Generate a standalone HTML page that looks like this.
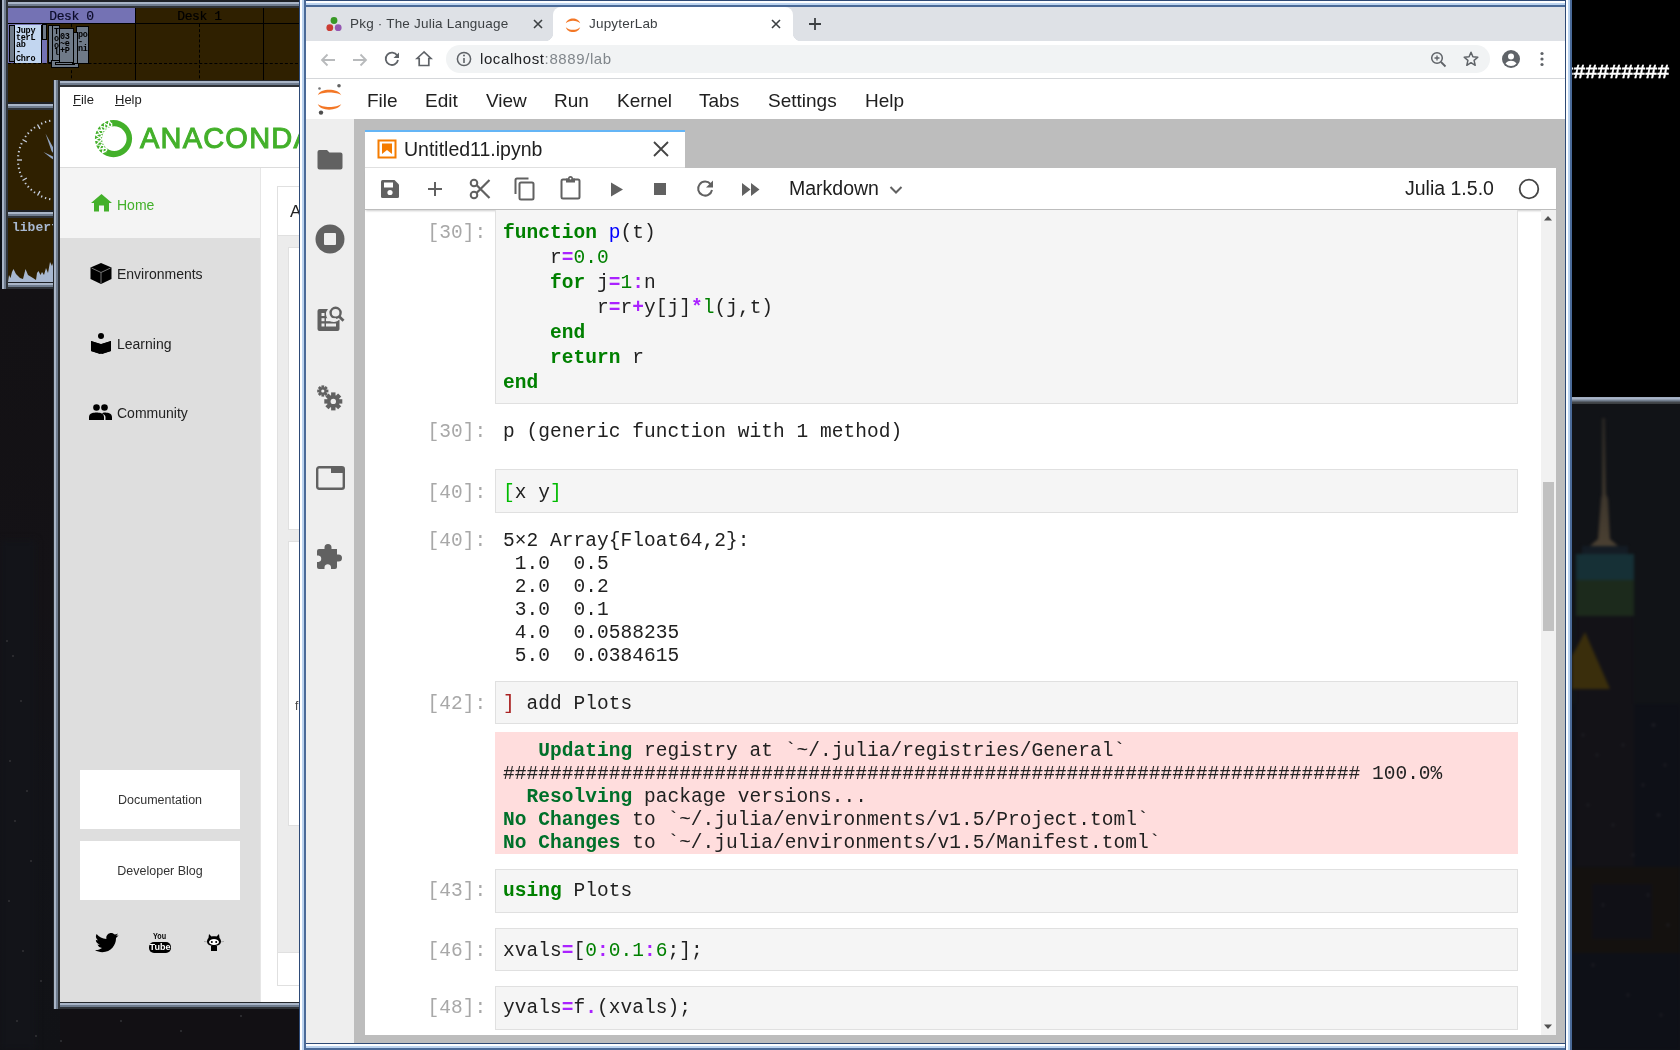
<!DOCTYPE html>
<html><head><meta charset="utf-8">
<style>
*{margin:0;padding:0;box-sizing:border-box}
html,body{width:1680px;height:1050px;overflow:hidden;background:#121014;font-family:"Liberation Sans",sans-serif;position:relative}
body>div{will-change:transform}
.a{position:absolute}
.mono{font-family:"Liberation Mono",monospace}
/* gray fvwm frame */
.gfr{background:#2f3338;box-shadow:inset 0 0 0 1px #25282c,inset 0 0 0 3px #a9b5c7,inset 0 0 0 5px #6f7c8e,inset 0 0 0 7px #2f3338}
.cl{position:absolute;font-family:"Liberation Mono",monospace;font-size:19.5px;white-space:pre;color:#212121;letter-spacing:0.04px}
.k{color:#008000;font-weight:bold}
.o{color:#aa22ff;font-weight:bold}
.n{color:#008000}
.g{color:#00702a;font-weight:bold}
.ib{background:#f5f5f5;border:1.5px solid #e0e0e0}
</style></head><body>

<!-- wallpaper bits -->
<div class="a" style="left:0;top:289px;width:60px;height:761px;background:linear-gradient(#131114,#141216 40%,#121318 70%,#111216)"></div>
<div class="a" style="left:0;top:540px;width:36px;height:510px;background:#131419;filter:blur(3px)"></div><div class="a" style="left:6px;top:640px;width:2px;height:2px;background:#2a2a2e"></div><div class="a" style="left:12px;top:655px;width:2px;height:2px;background:#2a2a2e"></div><div class="a" style="left:20px;top:700px;width:2px;height:2px;background:#2a2a2e"></div><div class="a" style="left:9px;top:760px;width:2px;height:2px;background:#2a2a2e"></div><div class="a" style="left:26px;top:790px;width:2px;height:2px;background:#2a2a2e"></div><div class="a" style="left:14px;top:820px;width:2px;height:2px;background:#2a2a2e"></div><div class="a" style="left:30px;top:860px;width:2px;height:2px;background:#2a2a2e"></div><div class="a" style="left:8px;top:900px;width:2px;height:2px;background:#2a2a2e"></div><div class="a" style="left:22px;top:950px;width:2px;height:2px;background:#2a2a2e"></div><div class="a" style="left:40px;top:980px;width:2px;height:2px;background:#2a2a2e"></div><div class="a" style="left:16px;top:1020px;width:2px;height:2px;background:#2a2a2e"></div><div class="a" style="left:35px;top:1035px;width:2px;height:2px;background:#2a2a2e"></div><div class="a" style="left:120px;top:1020px;width:2px;height:2px;background:#2a2a2e"></div><div class="a" style="left:180px;top:1030px;width:2px;height:2px;background:#2a2a2e"></div><div class="a" style="left:240px;top:1015px;width:2px;height:2px;background:#2a2a2e"></div><div class="a" style="left:60px;top:1040px;width:2px;height:2px;background:#2a2a2e"></div>
<div class="a" style="left:0;top:0;width:1680px;height:1050px;background:transparent"></div>
<div class="a" style="left:1572px;top:0;width:108px;height:397px;background:#000;overflow:hidden"><div class="a mono" style="left:-11px;top:62px;font-size:21px;font-weight:bold;color:#fff;line-height:21px;letter-spacing:-0.6px;-webkit-text-stroke:0.3px #fff">#########</div></div>
<div class="a" style="left:1572px;top:397px;width:108px;height:7px;background:linear-gradient(#9aa6b8 0,#a8b4c8 1px,#a8b4c8 2px,#7a8696 3px,#6c7888 4px,#45494e 5px,#3a3d40 7px)"></div>
<div id="city" class="a" style="left:1572px;top:404px;width:108px;height:646px;background:#111317;overflow:hidden">
<svg class="a" style="left:0;top:0;filter:blur(1.5px)" width="108" height="646" viewBox="0 0 108 646">
<defs><linearGradient id="spg" x1="0" y1="0" x2="0" y2="1"><stop offset="0" stop-color="#2a2724"/><stop offset="1" stop-color="#4a4032"/></linearGradient></defs>
<rect x="0" y="300" width="108" height="346" fill="#0e1017"/>
<path d="M30 14 L33 14 L34 90 L36 95 L38 135 L46 142 L18 142 L26 135 L29 95 L30 90Z" fill="url(#spg)"/>
<rect x="10" y="142" width="46" height="10" fill="#141c24"/>
<rect x="4" y="150" width="58" height="28" fill="#163036"/>
<rect x="4" y="176" width="58" height="36" fill="#1c2a1c"/>
<rect x="4" y="212" width="58" height="250" fill="#131217"/>
<path d="M13 228 L38 285 L0 285 L0 252Z" fill="#3a2e0c"/>
<rect x="0" y="463" width="108" height="86" fill="#14110f"/>
<rect x="20" y="480" width="60" height="55" fill="#101016"/>
<g fill="#26262c">
<rect x="10" y="330" width="2" height="2"/><rect x="24" y="350" width="2" height="2"/><rect x="50" y="340" width="2" height="2"/><rect x="80" y="320" width="3" height="2"/><rect x="70" y="380" width="2" height="2"/><rect x="92" y="360" width="2" height="2"/><rect x="15" y="400" width="2" height="2"/><rect x="40" y="420" width="2" height="2"/><rect x="85" y="410" width="3" height="2"/><rect x="60" y="450" width="2" height="2"/><rect x="30" y="500" width="2" height="2"/><rect x="75" y="490" width="2" height="2"/><rect x="95" y="520" width="2" height="2"/><rect x="20" y="560" width="2" height="2"/><rect x="55" y="590" width="2" height="2"/><rect x="88" y="610" width="2" height="2"/>
</g>
</svg></div>

<!-- pager -->
<div class="a" style="left:0;top:0;width:2px;height:289px;background:#0b0f16"></div>
<div class="a" style="left:0;top:0px;width:310px;height:8px;background:linear-gradient(to bottom,#1e2126 0 2px,#a9b5c7 2px 4px,#6f7c8e 4px 6px,#2f3338 6px 8px)"></div><div class="a" style="left:0;top:96px;width:310px;height:7px;background:linear-gradient(to bottom,#1e2126 0 1px,#a9b5c7 1px 3px,#6f7c8e 3px 5px,#2f3338 5px 7px)"></div><div class="a" style="left:0;top:0px;width:8px;height:103px;background:linear-gradient(to right,#0b0f16 0 2px,#a9b5c7 2px 4px,#6f7c8e 4px 6px,#2f3338 6px 8px)"></div>
<div class="a" style="left:8px;top:8px;width:300px;height:96px;background:#2f2000;overflow:hidden">
  <div class="a" style="left:0;top:0;width:127px;height:15px;background:#7472b4"></div>
  <div class="a mono" style="left:0;top:1px;width:127px;height:15px;line-height:16px;font-size:13px;letter-spacing:-0.4px;text-align:center;color:#0c0c2a;-webkit-text-stroke:0.2px #0c0c2a">Desk 0</div>
  <div class="a mono" style="left:128px;top:1px;width:127px;height:15px;line-height:16px;font-size:13px;letter-spacing:-0.4px;text-align:center;color:#000;-webkit-text-stroke:0.2px #000">Desk 1</div>
  <div class="a" style="left:0;top:15px;width:300px;height:1px;background:#000"></div>
  <div class="a" style="left:127px;top:0;width:1px;height:96px;background:#000"></div>
  <div class="a" style="left:255px;top:0;width:1px;height:96px;background:#000"></div>
  <div class="a" style="left:0;top:55px;width:300px;height:0;border-top:1px dashed #000"></div>
  <div class="a" style="left:63px;top:16px;width:0;height:80px;border-left:1px dashed #000"></div>
  <div class="a" style="left:191px;top:16px;width:0;height:80px;border-left:1px dashed #000"></div>
  <!-- mini windows -->
  <div class="a" style="left:0;top:16px;width:39px;height:39px;background:#7472b4"></div>
  <div class="a" style="left:1px;top:17px;width:6px;height:37px;background:#6f7a88;border:1px solid #000;overflow:hidden"></div>
  <div class="a" style="left:6px;top:17px;width:28px;height:38px;background:#c2d6f0;border:1px solid #000;overflow:hidden;border-top:0;border-bottom:0"><div class="mono" style="font-size:8.5px;line-height:7px;color:#000;padding:3px 0 0 1px;font-weight:bold;letter-spacing:-0.3px">Jupy<br>terL<br>ab<br>-<br>Chro</div></div>
  <div class="a" style="left:34px;top:16px;width:5px;height:16px;background:#6f7a88;border:1px solid #000;overflow:hidden"></div>
  <div class="a" style="left:40px;top:17px;width:5px;height:38px;background:#6f7a88;border:1px solid #000;overflow:hidden"></div>
  <div class="a" style="left:43px;top:52px;width:28px;height:8px;background:#6f7a88;border:1px solid #000;overflow:hidden"><div style="margin:1px 3px;height:3px;border:1px solid #000"></div></div>
  <div class="a" style="left:68px;top:18px;width:13px;height:38px;background:#6f7a88;border:1px solid #000;overflow:hidden"><div class="mono" style="font-size:8.5px;line-height:7px;color:#000;padding:5px 0 0 1px;font-weight:bold;letter-spacing:-0.3px">po<br>-<br>ni</div></div>
  <div class="a" style="left:64px;top:24px;width:6px;height:32px;background:#6f7a88;border:1px solid #000;overflow:hidden"></div>
  <div class="a" style="left:51px;top:20px;width:15px;height:35px;background:#6f7a88;border:1px solid #000;overflow:hidden"><div class="mono" style="font-size:8.5px;line-height:7px;color:#000;padding:5px 0 0 0;font-weight:bold;letter-spacing:-0.3px">03<br>~e<br>+P</div></div>
  <div class="a" style="left:44px;top:17px;width:8px;height:36px;background:#6f7a88;border:1px solid #000;overflow:hidden"><div class="mono" style="font-size:8.5px;line-height:7px;color:#000;padding:3px 0 0 1px;font-weight:bold;letter-spacing:-0.3px">T<br>o<br>o<br>l</div></div>
</div>
<!-- clock widget -->
<div class="a" style="left:0;top:102px;width:300px;height:8px;background:linear-gradient(to bottom,#1e2126 0 2px,#a9b5c7 2px 4px,#6f7c8e 4px 6px,#2f3338 6px 8px)"></div><div class="a" style="left:0;top:204px;width:300px;height:7px;background:linear-gradient(to bottom,#1e2126 0 1px,#a9b5c7 1px 3px,#6f7c8e 3px 5px,#2f3338 5px 7px)"></div><div class="a" style="left:0;top:102px;width:8px;height:109px;background:linear-gradient(to right,#0b0f16 0 2px,#a9b5c7 2px 4px,#6f7c8e 4px 6px,#2f3338 6px 8px)"></div>
<div class="a" style="left:8px;top:110px;width:290px;height:100px;background:#2f2000;overflow:hidden">
 <svg class="a" style="left:-8px;top:-6px" width="300" height="110" stroke="#c8d0e0" stroke-width="1.3" fill="none"><line x1="58.0" y1="15.0" x2="58.0" y2="20.0"/><line x1="62.3" y1="15.2" x2="62.1" y2="17.2"/><line x1="66.5" y1="15.9" x2="66.1" y2="17.9"/><line x1="70.7" y1="17.0" x2="70.1" y2="18.9"/><line x1="74.7" y1="18.5" x2="73.9" y2="20.4"/><line x1="78.5" y1="20.5" x2="76.0" y2="24.8"/><line x1="82.1" y1="22.8" x2="80.9" y2="24.4"/><line x1="85.4" y1="25.5" x2="84.1" y2="27.0"/><line x1="88.5" y1="28.6" x2="87.0" y2="29.9"/><line x1="91.2" y1="31.9" x2="89.6" y2="33.1"/><line x1="93.5" y1="35.5" x2="89.2" y2="38.0"/><line x1="95.5" y1="39.3" x2="93.6" y2="40.1"/><line x1="97.0" y1="43.3" x2="95.1" y2="43.9"/><line x1="98.1" y1="47.5" x2="96.1" y2="47.9"/><line x1="98.8" y1="51.7" x2="96.8" y2="51.9"/><line x1="99.0" y1="56.0" x2="94.0" y2="56.0"/><line x1="98.8" y1="60.3" x2="96.8" y2="60.1"/><line x1="98.1" y1="64.5" x2="96.1" y2="64.1"/><line x1="97.0" y1="68.7" x2="95.1" y2="68.1"/><line x1="95.5" y1="72.7" x2="93.6" y2="71.9"/><line x1="93.5" y1="76.5" x2="89.2" y2="74.0"/><line x1="91.2" y1="80.1" x2="89.6" y2="78.9"/><line x1="88.5" y1="83.4" x2="87.0" y2="82.1"/><line x1="85.4" y1="86.5" x2="84.1" y2="85.0"/><line x1="82.1" y1="89.2" x2="80.9" y2="87.6"/><line x1="78.5" y1="91.5" x2="76.0" y2="87.2"/><line x1="74.7" y1="93.5" x2="73.9" y2="91.6"/><line x1="70.7" y1="95.0" x2="70.1" y2="93.1"/><line x1="66.5" y1="96.1" x2="66.1" y2="94.1"/><line x1="62.3" y1="96.8" x2="62.1" y2="94.8"/><line x1="58.0" y1="97.0" x2="58.0" y2="92.0"/><line x1="53.7" y1="96.8" x2="53.9" y2="94.8"/><line x1="49.5" y1="96.1" x2="49.9" y2="94.1"/><line x1="45.3" y1="95.0" x2="45.9" y2="93.1"/><line x1="41.3" y1="93.5" x2="42.1" y2="91.6"/><line x1="37.5" y1="91.5" x2="40.0" y2="87.2"/><line x1="33.9" y1="89.2" x2="35.1" y2="87.6"/><line x1="30.6" y1="86.5" x2="31.9" y2="85.0"/><line x1="27.5" y1="83.4" x2="29.0" y2="82.1"/><line x1="24.8" y1="80.1" x2="26.4" y2="78.9"/><line x1="22.5" y1="76.5" x2="26.8" y2="74.0"/><line x1="20.5" y1="72.7" x2="22.4" y2="71.9"/><line x1="19.0" y1="68.7" x2="20.9" y2="68.1"/><line x1="17.9" y1="64.5" x2="19.9" y2="64.1"/><line x1="17.2" y1="60.3" x2="19.2" y2="60.1"/><line x1="17.0" y1="56.0" x2="22.0" y2="56.0"/><line x1="17.2" y1="51.7" x2="19.2" y2="51.9"/><line x1="17.9" y1="47.5" x2="19.9" y2="47.9"/><line x1="19.0" y1="43.3" x2="20.9" y2="43.9"/><line x1="20.5" y1="39.3" x2="22.4" y2="40.1"/><line x1="22.5" y1="35.5" x2="26.8" y2="38.0"/><line x1="24.8" y1="31.9" x2="26.4" y2="33.1"/><line x1="27.5" y1="28.6" x2="29.0" y2="29.9"/><line x1="30.6" y1="25.5" x2="31.9" y2="27.0"/><line x1="33.9" y1="22.8" x2="35.1" y2="24.4"/><line x1="37.5" y1="20.5" x2="40.0" y2="24.8"/><line x1="41.3" y1="18.5" x2="42.1" y2="20.4"/><line x1="45.3" y1="17.0" x2="45.9" y2="18.9"/><line x1="49.5" y1="15.9" x2="49.9" y2="17.9"/><line x1="53.7" y1="15.2" x2="53.9" y2="17.2"/>
 </svg><svg class="a" style="left:-8px;top:-6px" width="300" height="110"><path d="M45.5 29.5 L54 45 L54 50 L51.5 47Z" fill="#93a6c4"/><path d="M43.5 48 L54 53 L54 56 L51 54Z" fill="#93a6c4"/></svg>
</div>
<!-- libert widget -->
<div class="a" style="left:0;top:210px;width:300px;height:8px;background:linear-gradient(to bottom,#1e2126 0 2px,#a9b5c7 2px 4px,#6f7c8e 4px 6px,#2f3338 6px 8px)"></div><div class="a" style="left:0;top:282px;width:300px;height:7px;background:linear-gradient(to bottom,#1e2126 0 1px,#a9b5c7 1px 3px,#6f7c8e 3px 5px,#2f3338 5px 7px)"></div><div class="a" style="left:0;top:210px;width:8px;height:79px;background:linear-gradient(to right,#0b0f16 0 2px,#a9b5c7 2px 4px,#6f7c8e 4px 6px,#2f3338 6px 8px)"></div>
<div class="a" style="left:8px;top:218px;width:290px;height:64px;background:#2f2000;overflow:hidden">
 <div class="a mono" style="left:4px;top:2px;font-size:13px;font-weight:bold;color:#a8b8d0;line-height:16px">libert</div>
 <svg class="a" style="left:0;top:0" width="60" height="64"><path d="M0 64 L0.0 64.0 L1.0 57.0 L2.5 60.0 L4.0 54.0 L5.5 51.0 L8.0 56.0 L12.0 60.0 L15.0 61.0 L17.5 51.0 L20.0 57.0 L25.0 60.0 L28.0 62.0 L29.0 55.0 L30.5 53.0 L32.5 57.0 L34.0 54.0 L36.0 57.0 L38.0 50.0 L40.0 55.0 L42.0 44.0 L44.0 48.0 L45.0 45.0 L48.0 47.0 L52.0 52.0 L60 64Z" fill="#a8b8d0"/></svg>
</div>

<!-- anaconda window -->
<div class="a" style="left:53px;top:80px;width:260px;height:7px;background:linear-gradient(to bottom,#25282c 0 1px,#a9b5c7 1px 3px,#6f7c8e 3px 5px,#2f3338 5px 7px)"></div><div class="a" style="left:53px;top:1002px;width:260px;height:7px;background:linear-gradient(to bottom,#25282c 0 1px,#a9b5c7 1px 3px,#6f7c8e 3px 5px,#2f3338 5px 7px)"></div><div class="a" style="left:53px;top:80px;width:7px;height:929px;background:linear-gradient(to right,#25282c 0 1px,#a9b5c7 1px 3px,#6f7c8e 3px 5px,#2f3338 5px 7px)"></div><div class="a" style="left:306px;top:80px;width:7px;height:929px;background:linear-gradient(to right,#25282c 0 1px,#a9b5c7 1px 3px,#6f7c8e 3px 5px,#2f3338 5px 7px)"></div>
<div class="a" style="left:60px;top:87px;width:240px;height:915px;background:#fff;overflow:hidden">
  <div class="a" style="left:13px;top:5px;font-size:13px;color:#222;line-height:16px"><span style="text-decoration:underline">F</span>ile</div>
  <div class="a" style="left:55px;top:5px;font-size:13px;color:#222;line-height:16px"><span style="text-decoration:underline">H</span>elp</div>
  <svg class="a" style="left:34px;top:32px" width="40" height="40" viewBox="0 0 40 40"><defs><clipPath id="lc"><path d="M19.5 19.6 L5.4 46.1 L-5 40 L-5 -5 L16.9 -10.3Z"/></clipPath></defs><path fill-rule="evenodd" d="M0.8999999999999986 19.6A18.6 18.6 0 1 0 38.1 19.6A18.6 18.6 0 1 0 0.8999999999999986 19.6Z M7.999999999999999 19.6A12.3 12.3 0 1 0 32.6 19.6A12.3 12.3 0 1 0 7.999999999999999 19.6Z" fill="#43b02a"/><g clip-path="url(#lc)"><path d="M15.6 30.2L6.9 34.6M12.2 28.3L12.8 38.0M12.9 28.7L3.3 30.6M10.1 25.9L8.0 35.5M10.6 26.6L0.9 25.7M8.8 23.1L4.1 31.7M9.0 23.8L-0.1 20.3M8.2 20.0L1.3 26.9M8.3 20.8L0.5 14.9M8.5 16.9L0.0 21.6M8.4 17.6L2.5 9.8M9.7 13.9L0.2 16.2M9.3 14.6L5.9 5.5M11.7 11.5L1.9 11.0M11.1 12.0L10.3 2.3M14.2 9.6L4.9 6.5M13.5 10.0L15.4 0.4M17.2 8.5L9.1 3.0M16.4 8.7L20.9 0.0M20.3 8.3L14.1 0.8M19.5 8.3L26.2 1.2M23.4 9.0L19.5 0.0" stroke="#fff" stroke-width="1.3"/></g></svg>
  <div class="a" style="left:80px;top:36px;font-size:29px;color:#43b02a;line-height:30px;letter-spacing:1.2px;-webkit-text-stroke:1px #43b02a;transform:scaleX(1.0);transform-origin:left">ANACONDA</div>
  <div class="a" style="left:0;top:80px;width:240px;height:1px;background:#dcdcdc"></div>
  <!-- sidebar -->
  <div class="a" style="left:0;top:81px;width:200px;height:834px;background:#dedede"></div>
  <div class="a" style="left:0;top:81px;width:200px;height:70px;background:#f4f4f4"></div>
  <div class="a" style="left:200px;top:81px;width:1px;height:834px;background:#e6e6e6"></div>
  <svg class="a" style="left:31px;top:107px" width="21" height="18" viewBox="0 0 21 18"><path d="M10.5 0 L21 9 L18 9 L18 17.5 L13 17.5 L13 11.5 L8 11.5 L8 17.5 L3 17.5 L3 9 L0 9Z" fill="#43b02a"/></svg>
  <div class="a" style="left:57px;top:110px;font-size:14px;line-height:16px;color:#43b02a">Home</div>
  <svg class="a" style="left:30px;top:176px" width="22" height="21" viewBox="0 0 22 21"><path d="M11 0 L21.5 4.5 L21.5 16 L11 21 L0.5 16 L0.5 4.5Z" fill="#000"/><path d="M1.5 5 L11 9.5 L20.5 5 M11 9.5 L11 20.5" stroke="#777" stroke-width="1" fill="none"/></svg>
  <div class="a" style="left:57px;top:179px;font-size:14px;line-height:16px;color:#222">Environments</div>
  <svg class="a" style="left:31px;top:246px" width="20" height="21" viewBox="0 0 20 21"><circle cx="10" cy="3" r="3" fill="#000"/><path d="M0 8 L9 11 L9 21 L0 18Z M20 8 L11 11 L11 21 L20 18Z M9 21 L10 21.5 L11 21" fill="#000"/><path d="M0 8 L10 11 L20 8 L20 18 L10 21 L0 18Z" fill="#000"/></svg>
  <div class="a" style="left:57px;top:249px;font-size:14px;line-height:16px;color:#222">Learning</div>
  <svg class="a" style="left:29px;top:317px" width="23" height="16" viewBox="0 0 23 16"><circle cx="7.5" cy="3.5" r="3.3" fill="#000"/><circle cx="15.5" cy="3.5" r="3.3" fill="#000"/><path d="M0 16 L0 13 C0 9 5 8.5 7.5 8.5 C10 8.5 15 9 15 13 L15 16Z" fill="#000"/><path d="M13 9.5 C14 8.8 14.5 8.5 15.5 8.5 C18 8.5 23 9 23 13 L23 16 L16.5 16 L16.5 13 C16.5 11.5 15 10.3 13 9.5Z" fill="#000"/></svg>
  <div class="a" style="left:57px;top:318px;font-size:14px;line-height:16px;color:#222">Community</div>
  <div class="a" style="left:20px;top:683px;width:160px;height:59px;background:#fff;font-size:12.5px;line-height:61px;text-align:center;color:#333">Documentation</div>
  <div class="a" style="left:20px;top:754px;width:160px;height:59px;background:#fff;font-size:12.5px;line-height:61px;text-align:center;color:#333">Developer Blog</div>
  <!-- twitter -->
  <svg class="a" style="left:35px;top:846px" width="24" height="20" viewBox="0 0 24 20"><path d="M23.5 2.3c-.9.4-1.8.6-2.8.8 1-.6 1.8-1.5 2.1-2.7-.9.6-2 1-3.1 1.2C18.8.6 17.5 0 16.1 0c-2.7 0-4.8 2.2-4.8 4.8 0 .4 0 .8.1 1.1C7.4 5.7 3.9 3.8 1.6.9c-.4.7-.7 1.6-.7 2.4 0 1.7.9 3.2 2.1 4-.8 0-1.5-.2-2.2-.6v.1c0 2.3 1.7 4.3 3.9 4.7-.4.1-.8.2-1.3.2-.3 0-.6 0-.9-.1.6 1.9 2.4 3.3 4.5 3.4-1.7 1.3-3.7 2.1-6 2.1-.4 0-.8 0-1.1-.1 2.1 1.4 4.7 2.2 7.4 2.2 8.9 0 13.7-7.4 13.7-13.7v-.6c.9-.7 1.7-1.5 2.4-2.5z" fill="#000"/></svg>
  <!-- youtube -->
  <div class="a" style="left:89px;top:845px;width:22px;height:24px">
    <div class="a" style="left:4px;top:0;font-size:9px;font-weight:bold;line-height:9px;color:#000;transform:scaleX(.8);transform-origin:left">You</div>
    <div class="a" style="left:0;top:10px;width:22px;height:11px;background:#000;border-radius:5px;color:#fff;font-size:9px;font-weight:bold;line-height:11px;text-align:center">Tube</div>
  </div>
  <!-- github -->
  <svg class="a" style="left:143px;top:846px" width="22" height="19" viewBox="0 0 22 19"><path d="M6 1 L8.5 3.5 C10 3.2 12 3.2 13.5 3.5 L16 1 L16.5 5 C17.5 6 18 7.3 18 8.5 C18 11.5 15 13 11 13 C7 13 4 11.5 4 8.5 C4 7.3 4.5 6 5.5 5Z" fill="#000"/><ellipse cx="11" cy="9" rx="5" ry="3" fill="#fff"/><circle cx="8.8" cy="9" r="1" fill="#000"/><circle cx="13.2" cy="9" r="1" fill="#000"/><path d="M8 13 L8 18 L14 18 L14 13Z" fill="#000"/><path d="M1 8.5 L4 8.8 M18 8.8 L21 8.5" stroke="#888" stroke-width=".6"/></svg>
  <!-- right content -->
  <div class="a" style="left:217px;top:99px;width:40px;height:767px;border:1px solid #e0e0e0;background:#ececec"></div>
  <div class="a" style="left:218px;top:100px;width:40px;height:49px;background:#fff;border-bottom:1px solid #e0e0e0"></div>
  <div class="a" style="left:230px;top:115px;font-size:17px;line-height:20px;color:#222">A</div>
  <div class="a" style="left:228px;top:160px;width:40px;height:283px;background:#fff;border:1px solid #e0e0e0"></div>
  <div class="a" style="left:228px;top:454px;width:40px;height:285px;background:#fff;border:1px solid #e0e0e0"></div>
  <div class="a" style="left:235px;top:612px;font-size:12px;line-height:14px;color:#444">f</div>
  <div class="a" style="left:217px;top:866px;width:40px;height:33px;background:#fff;border:1px solid #e0e0e0;border-top:0"></div>
</div>

<!-- browser window -->
<div class="a" style="left:299px;top:0px;width:1273px;height:7px;background:linear-gradient(to bottom,#2e4a76 0 1px,#fdfeff 1px 3px,#bcd4f0 3px 5px,#4a6a98 5px 7px)"></div><div class="a" style="left:299px;top:1043px;width:1273px;height:7px;background:linear-gradient(to bottom,#2e4a76 0 1px,#fdfeff 1px 3px,#bcd4f0 3px 5px,#4a6a98 5px 7px)"></div><div class="a" style="left:299px;top:0px;width:7px;height:1050px;background:linear-gradient(to right,#2e4a76 0 1px,#fdfeff 1px 3px,#bcd4f0 3px 5px,#4a6a98 5px 7px)"></div><div class="a" style="left:1565px;top:0px;width:7px;height:1050px;background:linear-gradient(to right,#2e4a76 0 1px,#fdfeff 1px 3px,#bcd4f0 3px 5px,#4a6a98 5px 7px)"></div>
<div id="bc" class="a" style="left:306px;top:7px;width:1259px;height:1036px;background:#bdbdbd;overflow:hidden">
  <!-- tab strip -->
  <div class="a" style="left:0;top:0;width:1259px;height:34px;background:#dee1e6"></div>
  <svg class="a" style="left:20px;top:9px" width="16" height="16" viewBox="0 0 16 16"><circle cx="8" cy="4.5" r="3.4" fill="#389826"/><circle cx="3.8" cy="11.7" r="3.4" fill="#cb3c33"/><circle cx="12.2" cy="11.7" r="3.4" fill="#9558b2"/></svg>
  <div class="a" style="left:44px;top:9px;font-size:13.5px;line-height:16px;color:#3c4043;letter-spacing:0.2px">Pkg · The Julia Language</div>
  <svg class="a" style="left:227px;top:12px" width="10" height="10" viewBox="0 0 10 10"><path d="M1 1L9 9M9 1L1 9" stroke="#3c4043" stroke-width="1.6"/></svg>
  <div class="a" style="left:247px;top:0;width:240px;height:40px;background:#fff;border-radius:8px 8px 0 0"></div>
  <div class="a" style="left:239px;top:26px;width:8px;height:8px;background:radial-gradient(circle at 0 0,#dee1e6 8px,#fff 8.5px)"></div>
  <div class="a" style="left:487px;top:26px;width:8px;height:8px;background:radial-gradient(circle at 100% 0,#dee1e6 8px,#fff 8.5px)"></div>
  <svg class="a" style="left:259px;top:9px" width="16" height="18" viewBox="0 0 16 18"><path d="M0.8 7.2 C2.5 0.8 13.5 0.8 15.2 7.2 C12 3.8 4 3.8 0.8 7.2Z" fill="#f37726"/><path d="M0.8 11.2 C2.5 17.6 13.5 17.6 15.2 11.2 C12 14.6 4 14.6 0.8 11.2Z" fill="#f37726"/></svg>
  <div class="a" style="left:283px;top:9px;font-size:13.5px;line-height:16px;color:#3c4043;letter-spacing:0.2px">JupyterLab</div>
  <svg class="a" style="left:465px;top:12px" width="10" height="10" viewBox="0 0 10 10"><path d="M1 1L9 9M9 1L1 9" stroke="#3c4043" stroke-width="1.6"/></svg>
  <svg class="a" style="left:502px;top:10px" width="14" height="14" viewBox="0 0 14 14"><path d="M7 1V13M1 7H13" stroke="#3c4043" stroke-width="1.8"/></svg>
  <!-- toolbar -->
  <div class="a" style="left:0;top:34px;width:1259px;height:38px;background:#fff;border-bottom:1px solid #d5d7da"></div>
  <svg class="a" style="left:13px;top:44px" width="18" height="18" viewBox="0 0 18 18"><path d="M16 9H3M8.5 3.5L3 9l5.5 5.5" stroke="#b8babc" stroke-width="1.8" fill="none"/></svg>
  <svg class="a" style="left:45px;top:44px" width="18" height="18" viewBox="0 0 18 18"><path d="M2 9H15M9.5 3.5L15 9l-5.5 5.5" stroke="#b8babc" stroke-width="1.8" fill="none"/></svg>
  <svg class="a" style="left:77px;top:43px" width="18" height="18" viewBox="0 0 18 18"><path d="M14.2 5.5A6.2 6.2 0 1 0 15 10" stroke="#5f6368" stroke-width="1.8" fill="none"/><path d="M16 2.5V8H10.5Z" fill="#5f6368"/></svg>
  <svg class="a" style="left:109px;top:43px" width="18" height="18" viewBox="0 0 18 18"><path d="M9 2L2 8.5H4.2V15.5H13.8V8.5H16Z" stroke="#5f6368" stroke-width="1.7" fill="none" stroke-linejoin="miter"/></svg>
  <div class="a" style="left:140px;top:38px;width:1044px;height:28px;background:#f1f3f4;border-radius:14px"></div>
  <svg class="a" style="left:150px;top:44px" width="16" height="16" viewBox="0 0 16 16"><circle cx="8" cy="8" r="6.6" stroke="#5f6368" stroke-width="1.5" fill="none"/><path d="M8 7V12" stroke="#5f6368" stroke-width="1.6"/><circle cx="8" cy="4.6" r="1" fill="#5f6368"/></svg>
  <div class="a" style="left:174px;top:43px;font-size:15px;line-height:17px;color:#202124;letter-spacing:0.6px">localhost<span style="color:#80868b">:8889/lab</span></div>
  <svg class="a" style="left:1124px;top:44px" width="17" height="17" viewBox="0 0 17 17"><circle cx="7" cy="7" r="5.3" stroke="#5f6368" stroke-width="1.5" fill="none"/><path d="M11 11L15.5 15.5" stroke="#5f6368" stroke-width="1.8"/><path d="M7 4.5V9.5M4.5 7H9.5" stroke="#5f6368" stroke-width="1.3"/></svg>
  <svg class="a" style="left:1156px;top:43px" width="18" height="18" viewBox="0 0 18 18"><path d="M9 2.2L10.9 6.8 15.8 7.2 12.1 10.4 13.2 15.3 9 12.7 4.8 15.3 5.9 10.4 2.2 7.2 7.1 6.8Z" stroke="#5f6368" stroke-width="1.5" fill="none" stroke-linejoin="round"/></svg>
  <svg class="a" style="left:1195px;top:42px" width="20" height="20" viewBox="0 0 20 20"><circle cx="10" cy="10" r="9" fill="#5f6368"/><circle cx="10" cy="7.5" r="3" fill="#fff"/><path d="M4.5 14.5C6 12.3 8 11.7 10 11.7S14 12.3 15.5 14.5C14 16.2 12 17 10 17S6 16.2 4.5 14.5Z" fill="#fff"/></svg>
  <svg class="a" style="left:1233px;top:43px" width="6" height="18" viewBox="0 0 6 18"><circle cx="3" cy="3.5" r="1.6" fill="#5f6368"/><circle cx="3" cy="9" r="1.6" fill="#5f6368"/><circle cx="3" cy="14.5" r="1.6" fill="#5f6368"/></svg>
  <!-- jupyter menubar -->
  <div class="a" style="left:0;top:72px;width:1259px;height:40px;background:#fff"></div>
</div>
<!-- jupyterlab -->
<div id="jlab" class="a" style="left:306px;top:79px;width:1259px;height:964px;overflow:hidden">
<div class="a" style="left:-306px;top:-79px;width:1680px;height:1050px">
  <!-- jupyter logo -->
  <svg class="a" style="left:316px;top:83px" width="28" height="34" viewBox="0 0 28 34"><circle cx="3.5" cy="5.5" r="1.3" fill="#767677"/><circle cx="23" cy="2.8" r="1.8" fill="#616262"/><circle cx="5" cy="29.6" r="2.2" fill="#4e4e4e"/><path d="M1.8 12.2 C4 5 22 5 25.3 12.2 C21 8.6 6 8.6 1.8 12.2Z" fill="#f37726"/><path d="M1.8 21 C4 28.5 22 28.5 25.3 21 C21 25 6 25 1.8 21Z" fill="#f37726"/></svg>
  <div class="a" style="left:367px;top:89px;font-size:19px;line-height:23px;color:#202020">File</div>
  <div class="a" style="left:425px;top:89px;font-size:19px;line-height:23px;color:#202020">Edit</div>
  <div class="a" style="left:486px;top:89px;font-size:19px;line-height:23px;color:#202020">View</div>
  <div class="a" style="left:554px;top:89px;font-size:19px;line-height:23px;color:#202020">Run</div>
  <div class="a" style="left:617px;top:89px;font-size:19px;line-height:23px;color:#202020">Kernel</div>
  <div class="a" style="left:699px;top:89px;font-size:19px;line-height:23px;color:#202020">Tabs</div>
  <div class="a" style="left:768px;top:89px;font-size:19px;line-height:23px;color:#202020">Settings</div>
  <div class="a" style="left:865px;top:89px;font-size:19px;line-height:23px;color:#202020">Help</div>
  <!-- left sidebar -->
  <div class="a" style="left:306px;top:119px;width:48px;height:924px;background:#eeeeee"></div>
  <svg class="a" style="left:317px;top:149px" width="26" height="21" viewBox="0 0 26 21"><path d="M2.5 1H10L12.5 3.5H23.5Q25.5 3.5 25.5 5.5V18.5Q25.5 20.5 23.5 20.5H2.5Q0.5 20.5 0.5 18.5V3Q0.5 1 2.5 1Z" fill="#616161"/></svg>
  <svg class="a" style="left:315px;top:224px" width="30" height="30" viewBox="0 0 30 30"><circle cx="15" cy="15" r="14.5" fill="#616161"/><rect x="9" y="9" width="12" height="12" rx="1" fill="#eee"/></svg>
  <svg class="a" style="left:316px;top:303px" width="30" height="30" viewBox="0 0 30 30"><path d="M3.5 6H12A6.5 6.5 0 0 0 23.5 16.5V26Q23.5 28 21.5 28H3.5Q1.5 28 1.5 26V8Q1.5 6 3.5 6Z" fill="#616161"/><circle cx="19.6" cy="9.8" r="5" stroke="#616161" stroke-width="2.4" fill="none"/><path d="M23.2 13.4L27.5 17.7" stroke="#616161" stroke-width="2.8"/><rect x="5.5" y="10" width="3" height="3" fill="#eee"/><rect x="5.5" y="15.2" width="3" height="3" fill="#eee"/><rect x="5.5" y="20.5" width="3" height="3" fill="#eee"/><rect x="10" y="15.2" width="10" height="3" fill="#eee"/><rect x="10" y="20.5" width="10" height="3" fill="#eee"/></svg>
  <svg class="a" style="left:316px;top:383px" width="30" height="28" viewBox="0 0 30 28">
    <g fill="#616161" transform="translate(17.3,18.4)"><circle r="6.3"/><g id="tb"><rect x="-2.2" y="-9" width="4.4" height="4"/><rect x="-2.2" y="5" width="4.4" height="4"/><rect x="-9" y="-2.2" width="4" height="4.4"/><rect x="5" y="-2.2" width="4" height="4.4"/></g><g transform="rotate(45)"><rect x="-2.2" y="-9" width="4.4" height="4"/><rect x="-2.2" y="5" width="4.4" height="4"/><rect x="-9" y="-2.2" width="4" height="4.4"/><rect x="5" y="-2.2" width="4" height="4.4"/></g><circle r="2.7" fill="#eee"/></g>
    <g fill="#616161" transform="translate(6.8,8)"><circle r="3.8"/><rect x="-1.4" y="-5.6" width="2.8" height="2.5"/><rect x="-1.4" y="3.1" width="2.8" height="2.5"/><rect x="-5.6" y="-1.4" width="2.5" height="2.8"/><rect x="3.1" y="-1.4" width="2.5" height="2.8"/><g transform="rotate(45)"><rect x="-1.4" y="-5.6" width="2.8" height="2.5"/><rect x="-1.4" y="3.1" width="2.8" height="2.5"/><rect x="-5.6" y="-1.4" width="2.5" height="2.8"/><rect x="3.1" y="-1.4" width="2.5" height="2.8"/></g><circle r="1.6" fill="#eee"/></g>
  </svg>
  <svg class="a" style="left:316px;top:466px" width="29" height="24" viewBox="0 0 29 24"><rect x="1.2" y="1.2" width="26.6" height="21.6" rx="2" stroke="#616161" stroke-width="2.4" fill="none"/><rect x="15" y="1" width="13" height="6" fill="#616161"/></svg>
  <svg class="a" style="left:316px;top:543px" width="29" height="28" viewBox="0 0 29 28"><path d="M3 6H8.5V4.5A3.5 3.5 0 0 1 15.5 4.5V6H21V11.5H22.5A3.5 3.5 0 0 1 22.5 18.5H21V24Q21 26 19 26H15V24A3.3 3.3 0 0 0 8.5 24V26H3Q1 26 1 24V19H2.5A3.3 3.3 0 0 0 2.5 12.5H1V8Q1 6 3 6Z" fill="#616161"/></svg>
  <div class="a" style="left:354px;top:119px;width:1px;height:924px;background:#bdbdbd"></div>
  <!-- notebook tab -->
  <div class="a" style="left:365px;top:130px;width:320px;height:38px;background:#fff;border-top:2px solid #64b5f6;border-bottom:1px solid #e0e0e0"></div>
  <svg class="a" style="left:377px;top:139px" width="20" height="20" viewBox="0 0 20 20"><rect x="1.5" y="1.5" width="17" height="17" stroke="#f57c00" stroke-width="2" fill="none"/><path d="M5 4.5H15V15L10 11L5 15Z" fill="#f57c00"/></svg>
  <div class="a" style="left:404px;top:138px;font-size:19.5px;line-height:22px;color:#202020">Untitled11.ipynb</div>
  <svg class="a" style="left:652px;top:140px" width="18" height="18" viewBox="0 0 18 18"><path d="M2 2L16 16M16 2L2 16" stroke="#444" stroke-width="1.8"/></svg>
  <!-- notebook panel -->
  <div class="a" style="left:365px;top:168px;width:1191px;height:867px;background:#fff"></div>
  <div class="a" style="left:365px;top:168px;width:1191px;height:42px;background:#fff;border-bottom:1px solid #bdbdbd;box-shadow:0 2px 2px -1px rgba(0,0,0,.2)"></div>
  <svg class="a" style="left:380px;top:179px" width="20" height="20" viewBox="0 0 20 20"><path d="M2.5 1H14.5L19 5.5V17.5Q19 19 17.5 19H2.5Q1 19 1 17.5V2.5Q1 1 2.5 1Z" fill="#616161"/><rect x="4" y="3.5" width="9" height="5" fill="#fff"/><circle cx="10" cy="13.5" r="2.6" fill="#fff"/></svg>
  <svg class="a" style="left:427px;top:181px" width="16" height="16" viewBox="0 0 16 16"><path d="M8 1V15M1 8H15" stroke="#616161" stroke-width="2"/></svg>
  <svg class="a" style="left:469px;top:178px" width="22" height="22" viewBox="0 0 22 22"><circle cx="5" cy="5" r="3.3" stroke="#616161" stroke-width="2" fill="none"/><circle cx="5" cy="17" r="3.3" stroke="#616161" stroke-width="2" fill="none"/><path d="M7.5 7L20.5 20M7.5 15L20.5 2" stroke="#616161" stroke-width="2.2"/></svg>
  <svg class="a" style="left:514px;top:177px" width="22" height="24" viewBox="0 0 22 24"><path d="M14.5 1.5H3Q1.5 1.5 1.5 3V17" stroke="#616161" stroke-width="2" fill="none"/><rect x="5.5" y="5.5" width="14" height="17" rx="1.5" stroke="#616161" stroke-width="2" fill="none"/></svg>
  <svg class="a" style="left:560px;top:176px" width="21" height="24" viewBox="0 0 21 24"><rect x="1.5" y="3.5" width="18" height="19" rx="1.5" stroke="#616161" stroke-width="2" fill="none"/><path d="M6 2.5H8A2.5 2.5 0 0 1 13 2.5H15V6.5H6Z" fill="#616161"/><circle cx="10.5" cy="2.6" r="0.9" fill="#fff"/></svg>
  <svg class="a" style="left:610px;top:182px" width="14" height="15" viewBox="0 0 14 15"><path d="M1 0.5L13 7.5L1 14.5Z" fill="#616161"/></svg>
  <div class="a" style="left:654px;top:183px;width:12px;height:12px;background:#616161"></div>
  <svg class="a" style="left:695px;top:179px" width="20" height="20" viewBox="0 0 20 20"><path d="M15.6 5.2A7 7 0 1 0 17 11" stroke="#616161" stroke-width="2" fill="none"/><path d="M18 1.5V8.5H11Z" fill="#616161"/></svg>
  <svg class="a" style="left:741px;top:182px" width="20" height="15" viewBox="0 0 20 15"><path d="M1 1L9.5 7.5L1 14Z M10 1L18.5 7.5L10 14Z" fill="#616161"/></svg>
  <div class="a" style="left:789px;top:177px;font-size:19.5px;line-height:22px;color:#202020">Markdown</div>
  <svg class="a" style="left:889px;top:185px" width="14" height="10" viewBox="0 0 14 10"><path d="M1.5 2L7 7.5L12.5 2" stroke="#616161" stroke-width="2" fill="none"/></svg>
  <div class="a" style="left:1405px;top:177px;font-size:19.5px;line-height:22px;color:#202020">Julia 1.5.0</div>
  <svg class="a" style="left:1518px;top:178px" width="22" height="22" viewBox="0 0 22 22"><circle cx="11" cy="11" r="9.3" stroke="#444" stroke-width="1.8" fill="none"/></svg>
  <!-- scrollbar -->
  <div class="a" style="left:1541px;top:210px;width:15px;height:825px;background:#f1f1f1"></div>
  <div class="a" style="left:1543px;top:482px;width:11px;height:149px;background:#c1c1c1"></div>
  <svg class="a" style="left:1543px;top:214px" width="10" height="8" viewBox="0 0 10 8"><path d="M1 6.5L5 2L9 6.5Z" fill="#505050"/></svg>
  <svg class="a" style="left:1543px;top:1023px" width="10" height="8" viewBox="0 0 10 8"><path d="M1 1.5L5 6L9 1.5Z" fill="#505050"/></svg>
<div class="a" style="left:365px;top:210px;width:1176px;height:825px;overflow:hidden"><div class="a" style="left:-365px;top:-210px;width:1600px;height:1100px">
<div class="a ib" style="left:495px;top:150px;width:1023px;height:254px"></div>
<div class="cl" style="left:503px;top:220.5px;line-height:25px"><b class="k">function</b> <span style="color:#0000ff">p</span>(t)</div>
<div class="cl" style="left:503px;top:245.5px;line-height:25px">    r<span class="o">=</span><span class="n">0.0</span></div>
<div class="cl" style="left:503px;top:270.5px;line-height:25px">    <b class="k">for</b> j<span class="o">=</span><span class="n">1</span><span class="o">:</span>n</div>
<div class="cl" style="left:503px;top:295.5px;line-height:25px">        r<span class="o">=</span>r<span class="o">+</span>y[j]<span class="o">*</span><span class="n">l</span>(j,t)</div>
<div class="cl" style="left:503px;top:320.5px;line-height:25px">    <b class="k">end</b></div>
<div class="cl" style="left:503px;top:345.5px;line-height:25px">    <b class="k">return</b> r</div>
<div class="cl" style="left:503px;top:370.5px;line-height:25px"><b class="k">end</b></div>
<div class="cl" style="left:427.5px;top:220.5px;line-height:25px;color:#a8a8a8">[30]:</div>
<div class="cl" style="left:427.5px;top:419.6px;line-height:25px;color:#a8a8a8">[30]:</div>
<div class="cl" style="left:503px;top:419.6px;line-height:25px">p (generic function with 1 method)</div>
<div class="a ib" style="left:495px;top:469px;width:1023px;height:44px"></div>
<div class="cl" style="left:427.5px;top:480.5px;line-height:25px;color:#a8a8a8">[40]:</div>
<div class="cl" style="left:503px;top:480.5px;line-height:25px"><span style="color:#00bb00">[</span>x y<span style="color:#00bb00">]</span></div>
<div class="cl" style="left:427.5px;top:529.0px;line-height:25px;color:#a8a8a8">[40]:</div>
<div class="cl" style="left:503px;top:530.0px;line-height:23px">5×2 Array{Float64,2}:</div>
<div class="cl" style="left:503px;top:553.0px;line-height:23px"> 1.0  0.5</div>
<div class="cl" style="left:503px;top:576.0px;line-height:23px"> 2.0  0.2</div>
<div class="cl" style="left:503px;top:599.0px;line-height:23px"> 3.0  0.1</div>
<div class="cl" style="left:503px;top:622.0px;line-height:23px"> 4.0  0.0588235</div>
<div class="cl" style="left:503px;top:645.0px;line-height:23px"> 5.0  0.0384615</div>
<div class="a ib" style="left:495px;top:681px;width:1023px;height:43px"></div>
<div class="cl" style="left:427.5px;top:691.7px;line-height:25px;color:#a8a8a8">[42]:</div>
<div class="cl" style="left:503px;top:691.7px;line-height:25px"><span style="color:#aa2222">]</span> add Plots</div>
<div class="a" style="left:495px;top:732px;width:1023px;height:122px;background:#ffdddd"></div>
<div class="cl" style="left:503px;top:740.0px;line-height:23px">   <b class="g">Updating</b> registry at `~/.julia/registries/General`</div>
<div class="cl" style="left:503px;top:763.0px;line-height:23px">######################################################################### 100.0%</div>
<div class="cl" style="left:503px;top:786.0px;line-height:23px">  <b class="g">Resolving</b> package versions...</div>
<div class="cl" style="left:503px;top:809.0px;line-height:23px"><b class="g">No Changes</b> to `~/.julia/environments/v1.5/Project.toml`</div>
<div class="cl" style="left:503px;top:832.0px;line-height:23px"><b class="g">No Changes</b> to `~/.julia/environments/v1.5/Manifest.toml`</div>
<div class="a ib" style="left:495px;top:869px;width:1023px;height:44px"></div>
<div class="cl" style="left:427.5px;top:879.0px;line-height:25px;color:#a8a8a8">[43]:</div>
<div class="cl" style="left:503px;top:879.0px;line-height:25px"><b class="k">using</b> Plots</div>
<div class="a ib" style="left:495px;top:928px;width:1023px;height:43px"></div>
<div class="cl" style="left:427.5px;top:938.6px;line-height:25px;color:#a8a8a8">[46]:</div>
<div class="cl" style="left:503px;top:938.6px;line-height:25px">xvals<span class="o">=</span>[<span class="n">0</span><span class="o">:</span><span class="n">0.1</span><span class="o">:</span><span class="n">6</span>;];</div>
<div class="a ib" style="left:495px;top:986px;width:1023px;height:44px"></div>
<div class="cl" style="left:427.5px;top:996.0px;line-height:25px;color:#a8a8a8">[48]:</div>
<div class="cl" style="left:503px;top:996.0px;line-height:25px">yvals<span class="o">=</span>f<span class="o">.</span>(xvals);</div>
</div></div>
</div></div>

</body></html>
